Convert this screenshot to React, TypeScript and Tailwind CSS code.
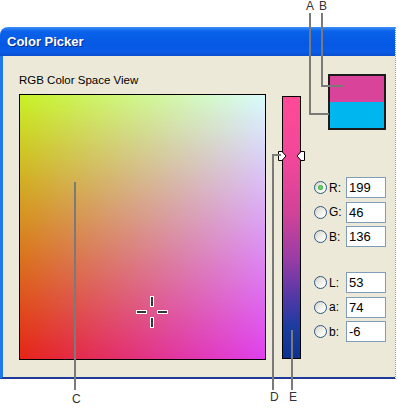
import React from "react";

function Radio({ checked }: { checked?: boolean }) {
  return (
    <div className="w-[13px] h-[13px] rounded-full border border-[#2a5a84] bg-[linear-gradient(135deg,#d6d4c8,#f4f4f0_60%,#ffffff)] flex items-center justify-center shrink-0">
      {checked && <div className="w-[5px] h-[5px] rounded-full bg-[radial-gradient(circle,#7ce07c,#1f9a1f)]" />}
    </div>
  );
}

function Row({ label, value, checked }: { label: string; value: string; checked?: boolean }) {
  return (
    <div className="flex items-center h-[21px]">
      <Radio checked={checked} />
      <div className="ml-[2px] w-[17px] text-[12px] leading-none text-black">{label}</div>
      <div className="w-[40px] h-[21px] border border-[#7f9db9] bg-white flex items-center pl-[2px] text-[13px] leading-none text-black">
        {value}
      </div>
    </div>
  );
}

export default function App() {
  return (
    <div className="relative w-[398px] h-[408px] bg-white overflow-hidden font-['Liberation_Sans',Arial,sans-serif]">
      <div className="pt-[27px]">
        <div className="w-[396px] border-r border-dotted border-[#9a9a9a]">
          <div className="h-[29px] rounded-tl-[8px] bg-[linear-gradient(to_bottom,#3c8ef8_0%,#0a62ea_15%,#0558e4_60%,#0a5ce6_85%,#0a4fd0_100%)] flex items-center pl-[7px]">
            <span className="text-white font-bold text-[13px] leading-none [text-shadow:1px_1px_0_#0a2a8a]">Color Picker</span>
          </div>
          <div className="h-[323px] bg-[#ece9d8] border-l-[3px] border-l-[#1f78ec] border-b-[2px] border-b-[#1d3a9a] pl-[16px] pt-[18px] flex">
            <div className="flex flex-col">
              <div className="h-[12px] text-[11.5px] leading-[12px] text-black whitespace-nowrap">RGB Color Space View</div>
              <div className="mt-[8px] relative w-[247px] h-[266px] border border-black bg-[linear-gradient(to_right,#e62418,#e040ee)]">
                <div className="absolute inset-0 bg-[linear-gradient(to_right,#c8f226,#d8fcfc)] [mask-image:linear-gradient(to_bottom,black,transparent)]" />
                <svg className="absolute left-[115px] top-[200px]" width="34" height="34" viewBox="0 0 34 34">
                  <g stroke="white" strokeWidth="4">
                    <line x1="17" y1="1" x2="17" y2="12" />
                    <line x1="17" y1="22" x2="17" y2="33" />
                    <line x1="1" y1="17" x2="12" y2="17" />
                    <line x1="22" y1="17" x2="33" y2="17" />
                  </g>
                  <g stroke="black" strokeWidth="1.6">
                    <line x1="17" y1="2" x2="17" y2="11" />
                    <line x1="17" y1="23" x2="17" y2="32" />
                    <line x1="2" y1="17" x2="11" y2="17" />
                    <line x1="23" y1="17" x2="32" y2="17" />
                  </g>
                </svg>
              </div>
            </div>
            <div className="ml-[16px] pt-[22px]">
              <div className="relative w-[19px] h-[263px] border border-black bg-[linear-gradient(to_bottom,#ff4a96_0%,#f0479a_25%,#d04298_45%,#9a3ca6_62%,#5a38a6_75%,#1c3ca0_88%,#0c3290_100%)]">
                <svg className="absolute left-[-6px] top-[53px]" width="31" height="12" viewBox="0 0 31 12">
                  <polygon points="1.5,1.5 5,1.5 9,6 5,10.5 1.5,10.5" fill="white" stroke="black" strokeWidth="1" />
                  <polygon points="27.5,1.5 24,1.5 20,6 24,10.5 27.5,10.5" fill="white" stroke="black" strokeWidth="1" />
                </svg>
              </div>
            </div>
            <div className="ml-[13px] flex flex-col">
              <div className="ml-[14px] w-[58px] h-[56px] border-2 border-[#1a1a1a] flex flex-col">
                <div className="flex-1 bg-[#d9449a]" />
                <div className="flex-1 bg-[#00b6ee]" />
              </div>
              <div className="mt-[47px] flex flex-col gap-[3.5px]">
                <Row label="R:" value="199" checked />
                <Row label="G:" value="46" />
                <Row label="B:" value="136" />
              </div>
              <div className="mt-[25px] flex flex-col gap-[3.5px]">
                <Row label="L:" value="53" />
                <Row label="a:" value="74" />
                <Row label="b:" value="-6" />
              </div>
            </div>
          </div>
        </div>
      </div>

      {/* annotation lines */}
      <div className="absolute left-[309px] top-[13px] w-[2px] h-[102px] bg-[#7a7a7a]" />
      <div className="absolute left-[309px] top-[113px] w-[20px] h-[2px] bg-[#7a7a7a]" />
      <div className="absolute left-[321px] top-[13px] w-[2px] h-[74px] bg-[#7a7a7a]" />
      <div className="absolute left-[321px] top-[85px] w-[22px] h-[2px] bg-[#7a7a7a]" />
      <div className="absolute left-[74px] top-[182px] w-[2px] h-[208px] bg-[#7a7a7a]" />
      <div className="absolute left-[272px] top-[154px] w-[9px] h-[2px] bg-[#7a7a7a]" />
      <div className="absolute left-[272px] top-[154px] w-[2px] h-[236px] bg-[#7a7a7a]" />
      <div className="absolute left-[291px] top-[330px] w-[2px] h-[60px] bg-[#7a7a7a]" />

      {/* annotation letters */}
      <div className="absolute left-[306px] top-[0px] text-[12px] leading-[12px] text-[#333]">A</div>
      <div className="absolute left-[319px] top-[0px] text-[12px] leading-[12px] text-[#333]">B</div>
      <div className="absolute left-[72px] top-[393px] text-[12px] leading-[12px] text-[#333]">C</div>
      <div className="absolute left-[270px] top-[391px] text-[12px] leading-[12px] text-[#333]">D</div>
      <div className="absolute left-[289px] top-[391px] text-[12px] leading-[12px] text-[#333]">E</div>
    </div>
  );
}
